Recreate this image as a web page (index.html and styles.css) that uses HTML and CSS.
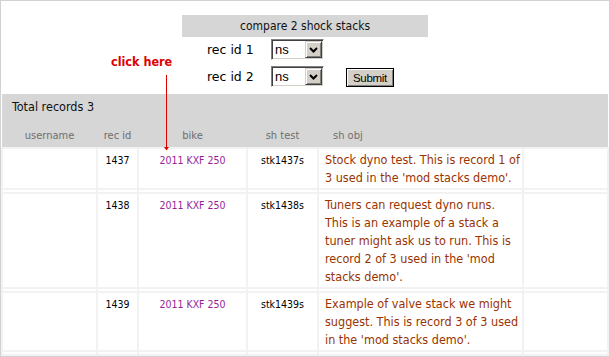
FILE: index.html
```html
<!DOCTYPE html>
<html>
<head>
<meta charset="utf-8">
<title>mod stacks demo</title>
<link rel="stylesheet" href="styles.css">
</head>
<body>
<div class="frame">
  <form class="cmp">
    <div class="cmp-title">compare 2 shock stacks</div>
    <div class="cmp-row">
      <span class="cmp-label">rec id 1</span>
      <span class="sel"><select class="sel-input"><option>ns</option></select><span class="sel-btn"><svg width="9" height="6" viewBox="0 0 9 6"><path d="M1 1 L4.5 4.5 L8 1" fill="none" stroke="#000" stroke-width="2"/></svg></span></span>
    </div>
    <div class="cmp-row">
      <span class="cmp-label">rec id 2</span>
      <span class="sel"><select class="sel-input"><option>ns</option></select><span class="sel-btn"><svg width="9" height="6" viewBox="0 0 9 6"><path d="M1 1 L4.5 4.5 L8 1" fill="none" stroke="#000" stroke-width="2"/></svg></span></span>
      <button type="button" class="submit">Submit</button>
    </div>
  </form>

  <div class="annot">click here</div>
  <svg class="arrow" width="9" height="78" viewBox="0 0 9 78"><rect x="4" y="1" width="1" height="73" fill="#e00000"/><polygon points="2,73 7,73 4.5,76.5" fill="#e00000"/></svg>

  <div class="band">
    <div class="total">Total records 3</div>
    <div class="cols">
      <span class="hc">username</span>
      <span class="hc">rec id</span>
      <span class="hc">bike</span>
      <span class="hc">sh test</span>
      <span class="hc hc-obj">sh obj</span>
      <span class="hc"></span>
    </div>
  </div>

  <table class="data">
    <colgroup>
      <col class="c1"><col class="c2"><col class="c3"><col class="c4"><col class="c5"><col>
    </colgroup>
    <tbody>
      <tr>
        <td></td>
        <td>1437</td>
        <td><a class="bike" href="#">2011 KXF 250</a></td>
        <td>stk1437s</td>
        <td class="obj">Stock dyno test. This is record 1 of<br>3 used in the 'mod stacks demo'.</td>
        <td></td>
      </tr>
      <tr class="sep"><td></td><td></td><td></td><td></td><td></td><td></td></tr>
      <tr>
        <td></td>
        <td>1438</td>
        <td><a class="bike" href="#">2011 KXF 250</a></td>
        <td>stk1438s</td>
        <td class="obj">Tuners can request dyno runs.<br>This is an example of a stack a<br>tuner might ask us to run. This is<br>record 2 of 3 used in the 'mod<br>stacks demo'.</td>
        <td></td>
      </tr>
      <tr class="sep"><td></td><td></td><td></td><td></td><td></td><td></td></tr>
      <tr>
        <td></td>
        <td>1439</td>
        <td><a class="bike" href="#">2011 KXF 250</a></td>
        <td>stk1439s</td>
        <td class="obj">Example of valve stack we might<br>suggest. This is record 3 of 3 used<br>in the 'mod stacks demo'.</td>
        <td></td>
      </tr>
      <tr class="sep"><td></td><td></td><td></td><td></td><td></td><td></td></tr>
    </tbody>
  </table>
</div>
</body>
</html>
```

FILE: styles.css
```css
* { box-sizing: border-box; }
html, body { margin: 0; padding: 0; background: #fff; }
body {
  font-family: "DejaVu Sans Condensed", "DejaVu Sans", sans-serif;
  font-stretch: condensed;
  color: #111;
}

.frame {
  position: relative;
  width: 610px;
  height: 357px;
  border: 1px solid #d2d2d2;
  overflow: hidden;
  padding-top: 14px;
}

/* compare form */
.cmp { width: 246px; margin: 0 auto; }
.cmp-title {
  height: 22px;
  line-height: 22px;
  background: #d6d6d6;
  text-align: center;
  font-size: 12px;
  color: #111;
}
.cmp-row {
  display: flex;
  align-items: center;
  height: 21px;
  margin-top: 2px;
}
.cmp-row + .cmp-row { margin-top: 6px; }
.cmp-label {
  width: 89px;
  padding-left: 25px;
  font-family: "DejaVu Sans", sans-serif;
  font-stretch: normal;
  font-size: 12.5px;
  color: #000;
}
.sel {
  display: flex;
  width: 53px;
  height: 21px;
  padding: 1px;
  border: 1px solid;
  border-color: #808080 #fff #fff #808080;
  box-shadow: inset 1px 1px #404040, inset -1px -1px #d4d0c8;
  background: #fff;
}
.sel-input {
  appearance: none;
  -webkit-appearance: none;
  border: 0;
  outline: 0;
  margin: 0;
  width: 32px;
  height: 17px;
  padding: 0 0 0 2px;
  background: #fff;
  font-family: "Liberation Sans", Arial, sans-serif;
  font-size: 13px;
  color: #000;
}
.sel-btn {
  width: 17px;
  height: 17px;
  display: flex;
  align-items: center;
  justify-content: center;
  background: #d4d0c8;
  border: 1px solid;
  border-color: #d4d0c8 #404040 #404040 #d4d0c8;
  box-shadow: inset 1px 1px #fff, inset -1px -1px #808080;
}
.sel-btn svg { display: block; }
.submit {
  margin: 2px 0 0 22px;
  width: 48px;
  height: 19px;
  padding: 0;
  border: 1px solid #000;
  background: #d4d0c8;
  box-shadow: inset 1px 1px #fff, inset -1px -1px #808080;
  font-family: "Liberation Sans", Arial, sans-serif;
  font-size: 11.5px;
  letter-spacing: -0.3px;
  color: #000;
}

/* annotation */
.annot {
  position: absolute;
  left: 110px;
  top: 53px;
  font-size: 12.5px;
  font-weight: bold;
  line-height: 16px;
  color: #e00000;
}
.arrow {
  position: absolute;
  left: 161px;
  top: 73px;
  display: block;
}

/* header band */
.band {
  margin: 7px 1px 0;
  height: 54px;
  background: #d6d6d6;
}
.total {
  padding: 3px 0 0 10px;
  line-height: 20px;
  font-size: 12.5px;
  color: #111;
}
.cols {
  display: grid;
  grid-template-columns: 93px 39px 107px 69px 203px 1fr;
  column-gap: 2px;
  padding-left: 1px;
  margin-top: 10px;
  line-height: 18px;
  font-size: 11px;
  color: #6e6e6e;
}
.hc { text-align: center; }
.hc-obj { text-align: left; padding-left: 14px; }

/* data table */
.data {
  width: 100%;
  margin-top: -1px;
  border-spacing: 2px;
  table-layout: fixed;
  background: #f2f2f2;
}
.c1 { width: 93px; }
.c2 { width: 39px; }
.c3 { width: 107px; }
.c4 { width: 69px; }
.c5 { width: 203px; }
.data td {
  background: #fff;
  padding: 2px 0 1px;
  vertical-align: top;
  text-align: center;
  line-height: 18px;
  font-size: 10.5px;
  color: #000;
}
.data td.obj {
  text-align: left;
  padding-left: 6px;
  font-size: 12.5px;
  color: #993300;
  white-space: nowrap;
}
.data .sep td {
  height: 2px;
  padding: 0;
  line-height: 0;
  font-size: 0;
}
.bike { color: #991f99; text-decoration: none; }
```
